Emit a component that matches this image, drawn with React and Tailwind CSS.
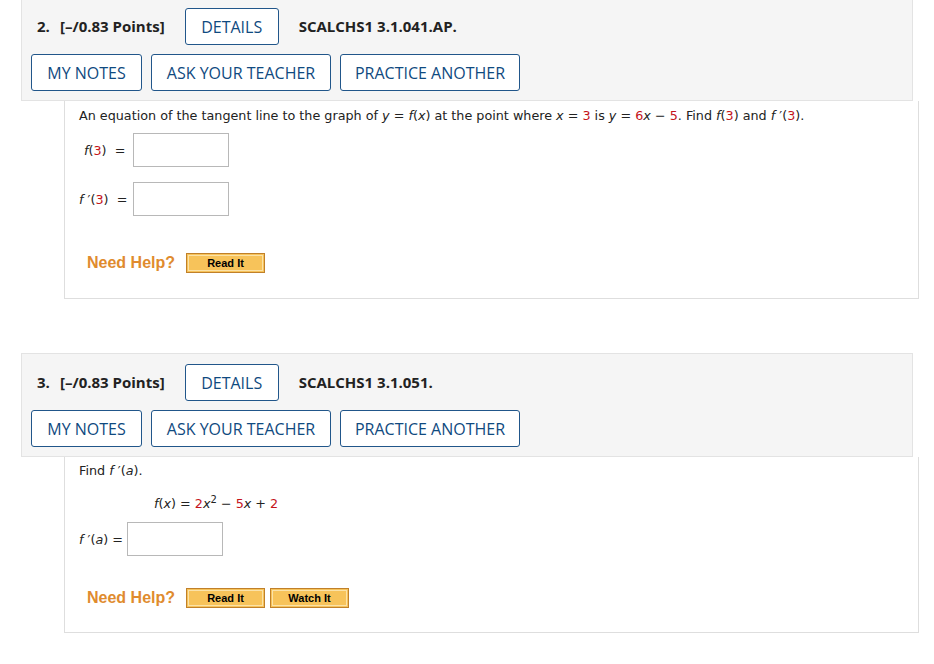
import React from 'react';

const BTN = 'h-[37px] border-[1.5px] border-[#21568a] rounded-[3px] bg-white text-[#0f4a80] text-[16px] leading-none flex items-center justify-center';
const R = 'text-[#c4141b]';
const V = { fontFamily: '"DejaVu Sans", Verdana, sans-serif' };

function Header({ num, code, top }) {
  return (
    <div className={`mx-[21px] bg-[#f5f5f5] border border-[#e3e3e3] px-[9px] pt-[10px] pb-[9px] ${top}`} style={{ fontFamily: '"Open Sans", sans-serif' }}>
      <div className="flex items-center h-[37px] pl-[6px] text-[15px] font-bold text-[#222]">
        <span className="w-[23px]">{num}.</span>
        <span>[–/0.83 Points]</span>
        <button className={`${BTN} ml-[20px] w-[94px] font-normal`}>DETAILS</button>
        <span className="ml-[20px]">{code}</span>
      </div>
      <div className="flex gap-[9px] mt-[9px]">
        <button className={`${BTN} w-[111px]`}>MY NOTES</button>
        <button className={`${BTN} w-[180px]`}>ASK YOUR TEACHER</button>
        <button className={`${BTN} w-[180px]`}>PRACTICE ANOTHER</button>
      </div>
    </div>
  );
}

function HelpBtn({ children }) {
  return (
    <button
      className="w-[79px] h-[20px] border border-[#c0802a] bg-[#f7c35a] p-[1px] text-[11px] font-bold text-black"
      style={{ fontFamily: '"Liberation Sans", Arial, sans-serif' }}
    >
      <div className="h-full border border-[#fbe2a8] flex items-center justify-center leading-none">{children}</div>
    </button>
  );
}

function NeedHelp({ buttons }) {
  return (
    <div className="flex items-center ml-[23px]">
      <span className="text-[16px] font-bold text-[#e08b2e] mr-[11px]" style={{ fontFamily: '"Liberation Sans", Arial, sans-serif' }}>Need Help?</span>
      <div className="flex gap-[5px]">
        {buttons.map(b => <HelpBtn key={b}>{b}</HelpBtn>)}
      </div>
    </div>
  );
}

const Box = () => <div className="w-[96px] h-[34px] border border-[#b8b8b8] bg-white" />;

export default function App() {
  return (
    <div className="w-[934px] h-[664px] bg-white overflow-hidden text-[#222]">
      <Header num="2" code="SCALCHS1 3.1.041.AP." top="-mt-[3px]" />
      <div className="ml-[64px] mr-[15px] border border-t-0 border-[#dedede] h-[198px] pl-[14px] pt-[5px] text-[12.75px] text-[#222]" style={V}>
        <p>An equation of the tangent line to the graph of <i>y</i> = <i>f</i>(<i>x</i>) at the point where <i>x</i> = <span className={R}>3</span> is <i>y</i> = <span className={R}>6</span><i>x</i> − <span className={R}>5</span>. Find <i>f</i>(<span className={R}>3</span>) and <i>f</i> ′(<span className={R}>3</span>).</p>
        <div className="flex items-center mt-[8px]">
          <span className="w-[54px] pl-[5px]"><i>f</i>(<span className={R}>3</span>)&nbsp;&nbsp;=</span>
          <Box />
        </div>
        <div className="flex items-center mt-[15px]">
          <span className="w-[54px]"><i>f</i> ′(<span className={R}>3</span>)&nbsp;&nbsp;=</span>
          <Box />
        </div>
        <div className="mt-[35px] -ml-[15px]">
          <NeedHelp buttons={['Read It']} />
        </div>
      </div>

      <Header num="3" code="SCALCHS1 3.1.051." top="mt-[54px]" />
      <div className="ml-[64px] mr-[15px] border border-t-0 border-[#dedede] h-[176px] pl-[14px] pt-[4px] text-[12.75px]" style={V}>
        <p>Find <i>f</i> ′(<i>a</i>).</p>
        <p className="ml-[75px] mt-[14px]"><i>f</i>(<i>x</i>) = <span className={R}>2</span><i>x</i><sup className="text-[10px]">2</sup> − <span className={R}>5</span><i>x</i> + <span className={R}>2</span></p>
        <div className="flex items-center mt-[9px]">
          <span className="w-[48px]"><i>f</i> ′(<i>a</i>) =</span>
          <Box />
        </div>
        <div className="mt-[30px] -ml-[15px]">
          <NeedHelp buttons={['Read It', 'Watch It']} />
        </div>
      </div>
    </div>
  );
}
